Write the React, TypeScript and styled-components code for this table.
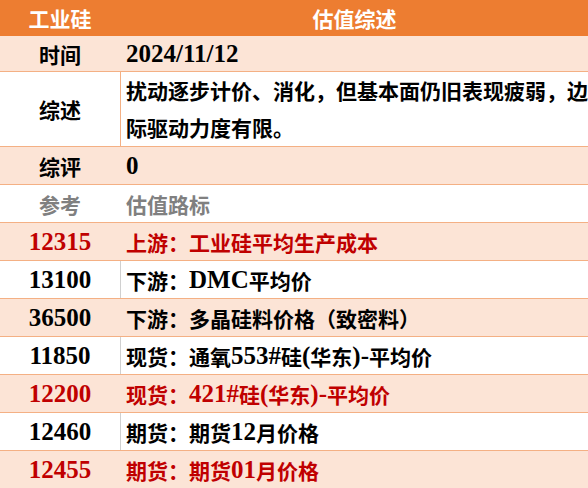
import React from "react";
import styled, { createGlobalStyle } from "styled-components";

const GlobalStyle = createGlobalStyle`
  *, *::before, *::after {
    box-sizing: border-box;
  }
  html, body {
    margin: 0;
    padding: 0;
    background: #ffffff;
  }
  body {
    font-family: "Noto Sans CJK SC", "Liberation Serif", sans-serif;
  }
`;

type Tone = "head" | "light" | "white";
type Ink = "black" | "gray" | "red" | "white";
type Divider = "none" | "orange" | "gray";

const bgs: Record<Tone, string> = {
  head: "#ED7D31",
  light: "#FCE4D6",
  white: "#FFFFFF",
};

const inks: Record<Ink, string> = {
  black: "#000000",
  gray: "#808080",
  red: "#C00000",
  white: "#FFFFFF",
};

const dividers: Record<Divider, string> = {
  none: "transparent",
  orange: "#F4B084",
  gray: "#D0D0D0",
};

const Table = styled.div`
  width: 588px;
  display: flex;
  flex-direction: column;
`;

const Row = styled.div<{ $tone: Tone; $height: number; $ink: Ink }>`
  display: grid;
  grid-template-columns: 121px 1fr;
  height: ${(p) => p.$height}px;
  background: ${(p) => bgs[p.$tone]};
  color: ${(p) => inks[p.$ink]};
  border-bottom: ${(p) => (p.$tone === "head" ? "none" : "1px solid #F4B084")};
  font-size: 21px;
  font-weight: 700;
  overflow: hidden;
`;

const LabelCell = styled.div<{ $divider: Divider }>`
  display: flex;
  align-items: center;
  justify-content: center;
  border-right: 1px solid ${(p) => dividers[p.$divider]};
  white-space: nowrap;
`;

const ValueCell = styled.div<{ $center?: boolean }>`
  display: flex;
  align-items: center;
  justify-content: ${(p) => (p.$center ? "center" : "flex-start")};
  padding-left: ${(p) => (p.$center ? "0" : "5px")};
  white-space: nowrap;
  overflow: hidden;
`;

const Para = styled.div`
  line-height: 37px;
`;

const Latin = styled.span`
  font-family: "Liberation Serif", serif;
  font-size: 25px;
  font-weight: 700;
  line-height: 1;
`;

const mixed = (text: string) =>
  text
    .split(/([\x20-\x7e]+)/)
    .filter((part) => part.length > 0)
    .map((part, i) =>
      /^[\x20-\x7e]+$/.test(part) ? <Latin key={i}>{part}</Latin> : <span key={i}>{part}</span>
    );

interface RowData {
  label: string;
  value: string;
  tone: Tone;
  ink?: Ink;
  divider?: Divider;
}

const rows: RowData[] = [
  { label: "时间", value: "2024/11/12", tone: "light" },
  { label: "综评", value: "0", tone: "light" },
  { label: "参考", value: "估值路标", tone: "white", ink: "gray" },
  { label: "12315", value: "上游：工业硅平均生产成本", tone: "light", ink: "red" },
  { label: "13100", value: "下游：DMC平均价", tone: "white", divider: "gray" },
  { label: "36500", value: "下游：多晶硅料价格（致密料）", tone: "light" },
  { label: "11850", value: "现货：通氧553#硅(华东)-平均价", tone: "white", divider: "gray" },
  { label: "12200", value: "现货：421#硅(华东)-平均价", tone: "light", ink: "red" },
  { label: "12460", value: "期货：期货12月价格", tone: "white", divider: "gray" },
  { label: "12455", value: "期货：期货01月价格", tone: "light", ink: "red" },
];

const renderRow = (r: RowData, height: number) => (
  <Row key={r.label} $tone={r.tone} $height={height} $ink={r.ink ?? "black"}>
    <LabelCell $divider={r.divider ?? "none"}>{mixed(r.label)}</LabelCell>
    <ValueCell>{mixed(r.value)}</ValueCell>
  </Row>
);

const App = () => {
  const [first, ...rest] = rows;
  return (
    <>
      <GlobalStyle />
      <Table>
        <Row $tone="head" $height={36} $ink="white">
          <LabelCell $divider="none">工业硅</LabelCell>
          <ValueCell $center>估值综述</ValueCell>
        </Row>
        {renderRow(first, 36)}
        <Row $tone="white" $height={75} $ink="black">
          <LabelCell $divider="orange">综述</LabelCell>
          <ValueCell>
            <Para>
              扰动逐步计价、消化，但基本面仍旧表现疲弱，边
              <br />
              际驱动力度有限。
            </Para>
          </ValueCell>
        </Row>
        {rest.map((r) => renderRow(r, 38))}
      </Table>
    </>
  );
};

export default App;
